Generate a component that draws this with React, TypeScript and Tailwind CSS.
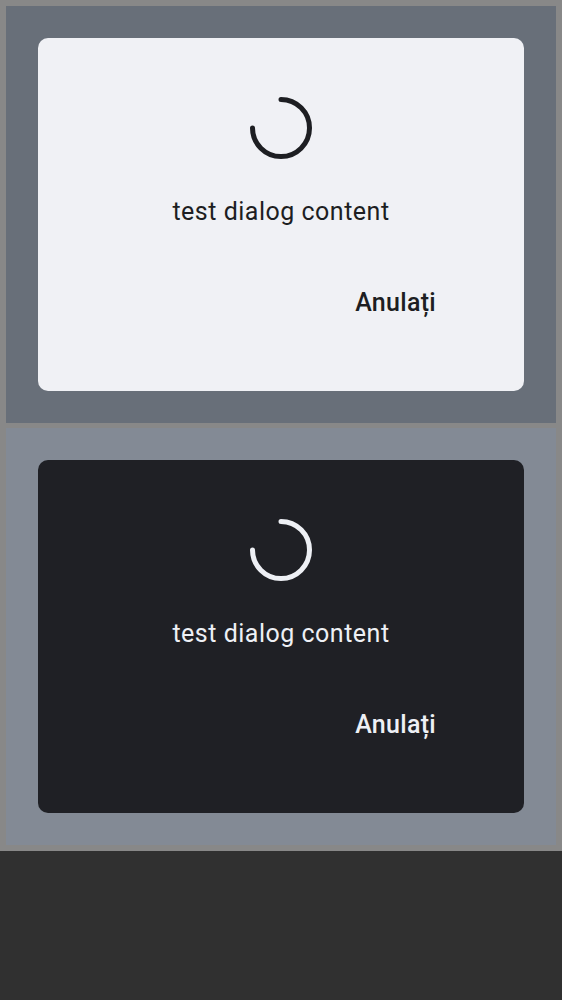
import { useState } from 'react';

type Theme = 'light' | 'dark';

function Spinner({ color }: { color: string }) {
  return (
    <svg width="64" height="64" viewBox="0 0 64 64" className="block">
      <path
        d="M32 3.5 A28.5 28.5 0 1 1 3.5 32"
        fill="none"
        stroke={color}
        strokeWidth="5"
        strokeLinecap="round"
      />
    </svg>
  );
}

function LoadingDialog({ theme }: { theme: Theme }) {
  const [open, setOpen] = useState(true);
  const dark = theme === 'dark';

  return (
    <div
      className={
        dark
          ? 'h-[353px] rounded-[10px] bg-[#1f2025] text-[#eef0f5] flex flex-col items-center'
          : 'h-[353px] rounded-[10px] bg-[#f0f1f5] text-[#1d1e22] flex flex-col items-center'
      }
    >
      <div className="mt-[58px]">
        <Spinner color={dark ? '#eef0f5' : '#1d1e22'} />
      </div>
      <p className="mt-[37px] text-[25px] leading-[30px] tracking-[0.5px]">
        test dialog content
      </p>
      <div className="w-full flex justify-end pr-[88px] mt-[61px]">
        <button
          onClick={() => setOpen(!open)}
          className="text-[25px] leading-[30px] font-medium tracking-[0.3px]"
        >
          Anulați
        </button>
      </div>
    </div>
  );
}

export default function App() {
  return (
    <div
      className="min-h-[1000px] bg-[#303030]"
      style={{ fontFamily: 'Roboto, "Noto Sans", sans-serif' }}
    >
      <div className="bg-[#888888] p-[6px] flex flex-col gap-[5px]">
        <div className="bg-[#686f79] px-[32px] py-[32px]">
          <LoadingDialog theme="light" />
        </div>
        <div className="bg-[#838a95] px-[32px] py-[32px]">
          <LoadingDialog theme="dark" />
        </div>
      </div>
    </div>
  );
}
